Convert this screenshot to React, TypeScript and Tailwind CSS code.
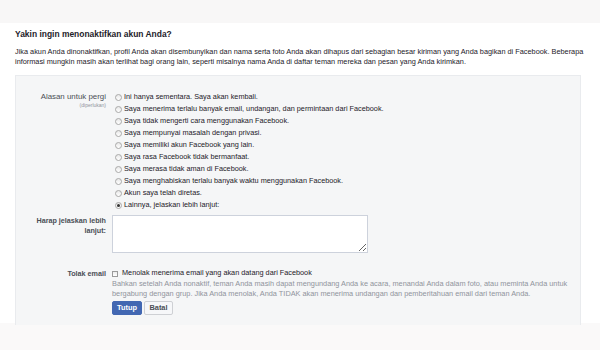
import React from 'react';

const reasons = [
  'Ini hanya sementara. Saya akan kembali.',
  'Saya menerima terlalu banyak email, undangan, dan permintaan dari Facebook.',
  'Saya tidak mengerti cara menggunakan Facebook.',
  'Saya mempunyai masalah dengan privasi.',
  'Saya memiliki akun Facebook yang lain.',
  'Saya rasa Facebook tidak bermanfaat.',
  'Saya merasa tidak aman di Facebook.',
  'Saya menghabiskan terlalu banyak waktu menggunakan Facebook.',
  'Akun saya telah diretas.',
  'Lainnya, jelaskan lebih lanjut:',
];

const Radio = ({ checked }: { checked?: boolean }) => (
  <span className="ml-[3px] mr-[2px] flex h-[7px] w-[7px] shrink-0 items-center justify-center rounded-full border border-[#a9a9a9] bg-gradient-to-b from-[#e8e8e8] to-[#ffffff]">
    {checked && <span className="h-[3px] w-[3px] rounded-full bg-[#333]" />}
  </span>
);

export default function App() {
  return (
    <div className="flex h-[350px] w-[600px] flex-col bg-[#faf9f9] font-['Liberation_Sans',Arial,sans-serif] text-[#1d2129]">
      <div className="h-[23px] bg-[#f8f7f7]" />

      <div className="h-[300px] bg-white px-[15px] pt-[5px]">
        <h2 className="text-[8.45px] font-bold leading-[12px]">Yakin ingin menonaktifkan akun Anda?</h2>
        <p className="mt-[7px] whitespace-nowrap text-[7.34px] leading-[10px]">
          Jika akun Anda dinonaktifkan, profil Anda akan disembunyikan dan nama serta foto Anda akan dihapus dari sebagian besar kiriman yang Anda bagikan di Facebook. Beberapa
          <br />
          informasi mungkin masih akan terlihat bagi orang lain, seperti misalnya nama Anda di daftar teman mereka dan pesan yang Anda kirimkan.
        </p>

        <div className="mt-[8px] h-[250px] w-[566px] border-x border-t border-[#e9ebee] bg-[#f5f6f7] pt-[15px]">
          {/* alasan */}
          <div className="flex">
            <div className="w-[90px] shrink-0 text-right text-[#4b4f56]">
              <div className="text-[7.9px] leading-[12px]">Alasan untuk pergi</div>
              <div className="text-[5px] leading-[5px] text-[#90949c]">(diperlukan)</div>
            </div>
            <div className="ml-[6px] flex flex-col">
              {reasons.map((r, i) => (
                <label key={r} className="flex h-[12px] items-center text-[7.3px]">
                  <Radio checked={i === reasons.length - 1} />
                  <span>{r}</span>
                </label>
              ))}
            </div>
          </div>

          {/* penjelasan */}
          <div className="mt-[4px] flex">
            <div className="w-[90px] shrink-0 pt-[1px] text-right text-[7.2px] font-bold leading-[10px] text-[#4b4f56]">
              Harap jelaskan lebih lanjut:
            </div>
            <textarea className="ml-[6px] h-[38px] w-[256px] border border-[#cdd2dc] bg-white outline-none" />
          </div>

          {/* tolak email */}
          <div className="mt-[15px] flex">
            <div className="w-[90px] shrink-0 text-right text-[7.2px] font-bold leading-[11px] text-[#4b4f56]">Tolak email</div>
            <div className="ml-[6px] flex flex-col">
              <label className="flex h-[11px] items-center text-[7.3px]">
                <span className="mr-[4px] h-[6px] w-[6px] shrink-0 border border-[#9a9a9a] bg-gradient-to-b from-[#ececec] to-white" />
                Menolak menerima email yang akan datang dari Facebook
              </label>
              <div className="whitespace-nowrap text-[7.35px] leading-[10px] text-[#90949c]">
                Bahkan setelah Anda nonaktif, teman Anda masih dapat mengundang Anda ke acara, menandai Anda dalam foto, atau meminta Anda untuk
                <br />
                bergabung dengan grup. Jika Anda menolak, Anda TIDAK akan menerima undangan dan pemberitahuan email dari teman Anda.
              </div>
              <div className="mt-[2px] flex gap-[2px]">
                <button className="h-[14px] w-[30px] rounded-[2px] border border-[#4267b2] bg-[#4267b2] text-[7.4px] font-bold text-white">
                  Tutup
                </button>
                <button className="h-[14px] w-[29px] rounded-[2px] border border-[#ced0d4] bg-[#f6f7f9] text-[7.4px] font-bold text-[#4b4f56]">
                  Batal
                </button>
              </div>
            </div>
          </div>
        </div>
      </div>
    </div>
  );
}
